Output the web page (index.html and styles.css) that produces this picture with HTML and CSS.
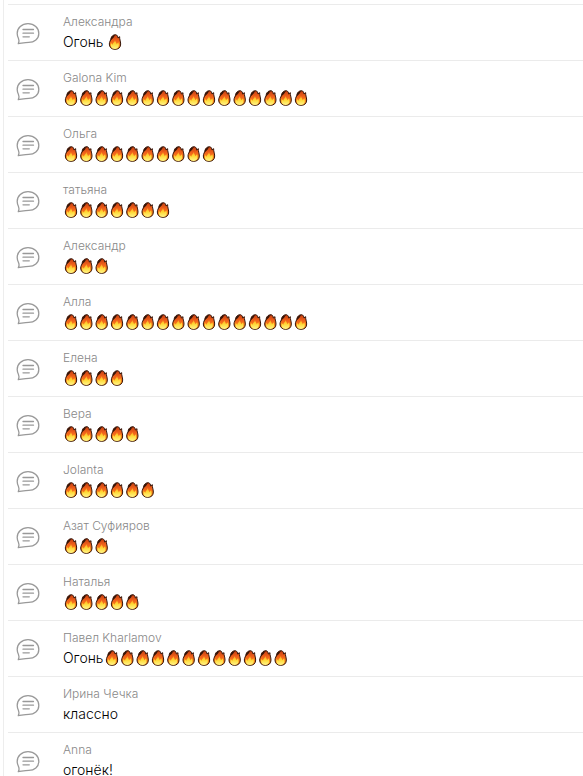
FILE: index.html
```html
<!DOCTYPE html>
<html lang="ru">
<head>
    <meta charset="UTF-8">
    <meta name="viewport" content="width=device-width, initial-scale=1.0">
    <title>Комментарии</title>
    <link rel="stylesheet" href="styles.css">
</head>
<body>
    <svg class="sprite" aria-hidden="true">
        <defs>
            <linearGradient id="flame-fill" x1="0" y1="0" x2="0" y2="1">
                <stop offset="0" stop-color="#c43c10"/>
                <stop offset="0.4" stop-color="#f0611a"/>
                <stop offset="1" stop-color="#ffa01c"/>
            </linearGradient>
            <linearGradient id="flame-core" x1="0" y1="0" x2="0" y2="1">
                <stop offset="0" stop-color="#ffa01e"/>
                <stop offset="0.45" stop-color="#ffd835"/>
                <stop offset="1" stop-color="#fff68a"/>
            </linearGradient>
        </defs>
        <symbol id="bubble" viewBox="0 -1 24 24">
            <path d="M2.3 21.6 C3.4 19.7 3.3 18.2 2.4 16.2 C1.7 14.8 1.2 13.4 1.2 11.5 C1.2 5.8 5.8 1.7 12 1.7 C18.3 1.7 22.8 6 22.8 11.4 C22.8 17 18.3 20.3 12.8 20.3 C9 20.3 6 21.1 2.3 21.6 Z"/>
            <path d="M7 7.5 H17.5 M7 11.2 H17.5 M7 14.8 H13.3"/>
        </symbol>
        <symbol id="flame" viewBox="0 0 46 48">
            <path fill="url(#flame-fill)" stroke="#351509" stroke-width="3" stroke-linejoin="round" d="M12 13 C14 6 19 2 26 2 C31 3 33 8 33 12 L38 8 C37 15 41 21 41 30 C41 40 35 46 24 46 C13 46 7 39 7 30 C7 23 12 18 12 13 Z"/>
            <path fill="#351509" d="M12 12 C15 6 19 3 26 3 C20 7 22 10 18 13 C15 15 13 18 10 21 Z"/>
            <path fill="url(#flame-core)" d="M24 18 C25 24 29 26 29 31 L34 25 C38 34 35 45 24 45 C13 45 10 36 12 27 L17 32 C17 27 23 25 24 18 Z"/>
        </symbol>
    </svg>

    <main class="comments" id="comments"></main>

    <script src="script.js"></script>
</body>
</html>
```
FILE: styles.css
```css
* {
    box-sizing: border-box;
}

body {
    margin: 0;
    background-color: #fff;
    font-family: Inter, "Open Sans", sans-serif;
    font-weight: 300;
    color: #000;
}

/* not display: none, the gradients have to stay available */
.sprite {
    position: absolute;
    width: 0;
    height: 0;
}

.comments {
    height: 100vh;
    overflow: hidden;
    margin-left: 3px;
    padding: 4px 0 0 4px;
    border-left: 1px solid #ededed;
}

.comment {
    display: flex;
    align-items: center;
    gap: 23px;
    height: 56px;
    padding-left: 8px;
    border-top: 1px solid #ebebeb;
}

.comment-icon {
    flex: none;
    width: 24px;
    height: 24px;
    fill: none;
    stroke: #999;
    stroke-width: 1.3;
    stroke-linecap: round;
    stroke-linejoin: round;
}

.comment-author {
    font-size: 12px;
    line-height: 18px;
    color: #888;
}

.comment-text {
    display: flex;
    align-items: center;
    height: 22px;
    font-size: 14px;
    line-height: 22px;
    white-space: pre;
}

.flames {
    display: block;
    height: 16px;
}
```
FILE: script.js
```js
const comments = [
    { author: "Александра", text: "Огонь ", flames: 1 },
    { author: "Galona Kim", text: "", flames: 16 },
    { author: "Ольга", text: "", flames: 10 },
    { author: "татьяна", text: "", flames: 7 },
    { author: "Александр", text: "", flames: 3 },
    { author: "Алла", text: "", flames: 16 },
    { author: "Елена", text: "", flames: 4 },
    { author: "Вера", text: "", flames: 5 },
    { author: "Jolanta", text: "", flames: 6 },
    { author: "Азат Суфияров", text: "", flames: 3 },
    { author: "Наталья", text: "", flames: 5 },
    { author: "Павел Kharlamov", text: "Огонь", flames: 12 },
    { author: "Ирина Чечка", text: "классно", flames: 0 },
    { author: "Anna", text: "огонёк!", flames: 0 }
];

// Ряд огоньков, каждый занимает 46 единиц по ширине
function drawFlames(count) {
    if (!count) return "";
    let items = "";
    for (let i = 0; i < count; i++) {
        items += `<use href="#flame" x="${i * 46}" width="46" height="48"/>`;
    }
    return `<svg class="flames" viewBox="0 0 ${count * 46} 48" role="img" aria-label="огонь">${items}</svg>`;
}

document.getElementById("comments").innerHTML = comments.map(c => `
    <article class="comment">
        <svg class="comment-icon" aria-hidden="true"><use href="#bubble"/></svg>
        <div class="comment-body">
            <div class="comment-author">${c.author}</div>
            <div class="comment-text">${c.text}${drawFlames(c.flames)}</div>
        </div>
    </article>`).join("");
```
